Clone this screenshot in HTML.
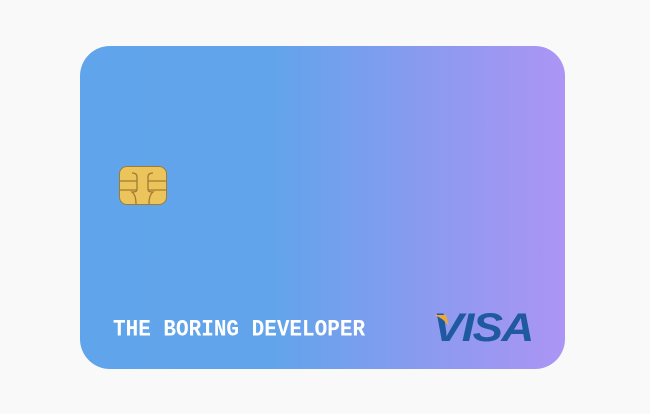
<!DOCTYPE html>
<html><head><style>
body{margin:0;width:650px;height:414px;background:#f9f9f9;position:relative;overflow:hidden}
.card{position:absolute;left:80px;top:46px;width:485px;height:323px;border-radius:30px;
background:linear-gradient(90deg,#60a5eb 0%,#62a4eb 40%,#8b9aef 72%,#ac95f5 100%)}
.chip{position:absolute;left:119px;top:166px;width:46px;height:37px;border:1.5px solid #a07c30;border-radius:8px;background:#ebc55c}
.name{position:absolute;left:113px;top:318px;font:bold 21px "Liberation Mono",monospace;color:#fff;transform:scaleY(1.1);transform-origin:left top}
.visa{position:absolute;left:433px;top:306px;font:italic 900 40px "Liberation Sans",sans-serif;color:#1f5aa0;letter-spacing:-1.5px;transform:scaleX(1.14);transform-origin:left top}
</style></head><body>
<div class="card"></div>
<div class="chip"><svg width="46" height="37" viewBox="0 0 46 37" style="position:absolute;left:0;top:0" fill="none" stroke="#a07c30" stroke-width="1.3">
<path d="M12 6 Q17 6 17 10 V14 H0 M17 14 V23 Q17 25 12 25 Q16 28 16 37"/>
<path d="M33 6 Q28 6 28 10 V14 H46 M28 14 V23 Q28 25 33 25 Q29 28 29 37"/>
<path d="M0 23 H17 M28 23 H46"/>
</svg></div>
<div class="name">THE BORING DEVELOPER</div>
<div class="visa">VISA</div>
<svg style="position:absolute;left:434px;top:315px" width="20" height="14"><path d="M0 0 H12 L15 11 Q9 3 0 0Z" fill="#f0a830"/></svg>
</body></html>
